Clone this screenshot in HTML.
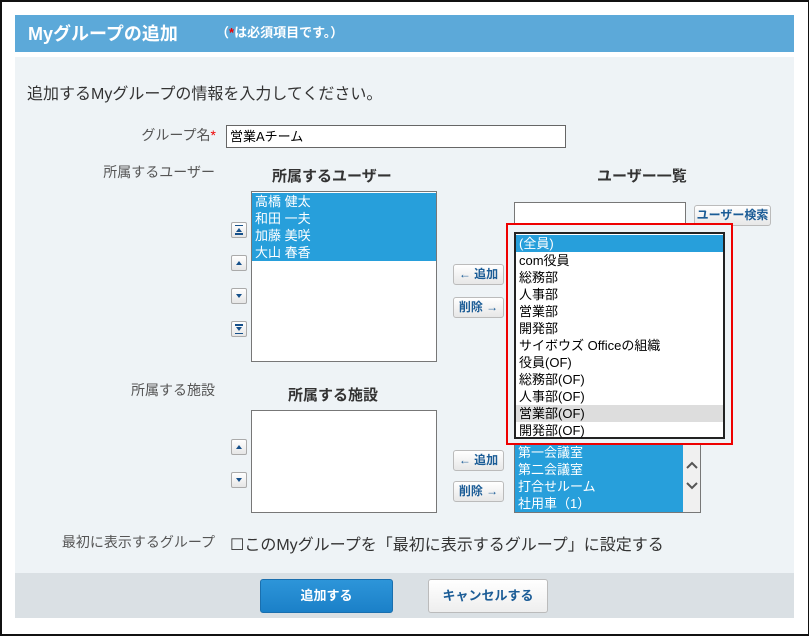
<!DOCTYPE html>
<html><head><meta charset="utf-8"><style>
*{margin:0;padding:0;box-sizing:border-box}
body{width:809px;height:636px;position:relative;background:#fff;font-family:"Liberation Sans","Noto Sans CJK JP",sans-serif;overflow:hidden}
.a{position:absolute}
.frame{left:0;top:0;width:809px;height:636px;border:2px solid #111;border-right-width:1px;border-bottom-width:2px}
.hdr{left:15px;top:15px;width:779px;height:37px;background:#5ca9d9}
.body{left:15px;top:57px;width:779px;height:516px;background:#eef3f6}
.foot{left:15px;top:573px;width:779px;height:45px;background:#dae0e4}
.lbl{font-size:14px;color:#555;text-align:right;width:200px;left:15px}
.h{font-size:15px;font-weight:bold;color:#333}
.list{background:#fff;border:1px solid #777}
.sel{background:#279fdb;color:#fff}
.row{font-size:13px;line-height:17px;height:17px;padding-left:3px;white-space:nowrap}
.ob{width:16px;height:16px;border:1px solid #aaa;border-radius:2px;background:linear-gradient(#fff,#e6e6e6);left:231px}
.ob:after{content:"";position:absolute;left:4px;top:5px;border-left:3px solid transparent;border-right:3px solid transparent}
.up:after{border-bottom:4px solid #16508a}
.dn:after{border-top:4px solid #16508a}
.bar{position:absolute;left:3px;width:8px;height:1px;background:#16508a}
.btn{border:1px solid #bbb;border-radius:3px;background:linear-gradient(#fff,#e7e7e7);font-size:12px;font-weight:bold;color:#1b5c96;text-align:center;line-height:19px;height:21px}
</style></head><body>
<div class="a frame"></div>
<div class="a hdr"></div>
<div class="a" style="left:28px;top:20px;font-size:18px;font-weight:bold;color:#fff">Myグループの追加</div>
<div class="a" style="left:216px;top:22px;font-size:13px;font-weight:bold;color:#fff">（<span style="color:#e00">*</span>は必須項目です。）</div>
<div class="a body"></div>
<div class="a foot"></div>
<div class="a" style="left:27px;top:80px;font-size:16px;color:#333">追加するMyグループの情報を入力してください。</div>
<div class="a lbl" style="top:125px;text-align:right;width:201px">グループ名<span style="color:#e00">*</span></div>
<div class="a" style="left:226px;top:125px;width:340px;height:23px;background:#fff;border:1px solid #666;font-size:13px;line-height:21px;padding-left:3px">営業Aチーム</div>
<div class="a lbl" style="top:162px">所属するユーザー</div>
<div class="a h" style="left:272px;top:165px">所属するユーザー</div>
<div class="a h" style="left:597px;top:165px">ユーザー一覧</div>
<div class="a list" style="left:251px;top:191px;width:186px;height:171px;padding-top:1px">
<div class="row sel">高橋 健太</div><div class="row sel">和田 一夫</div><div class="row sel">加藤 美咲</div><div class="row sel">大山 春香</div></div>
<div class="a ob up" style="top:222px"><div class="bar" style="top:2px"></div><div class="bar" style="top:10px;height:2px"></div></div>
<div class="a ob up" style="top:255px"></div>
<div class="a ob dn" style="top:288px"></div>
<div class="a ob dn" style="top:321px"><div class="bar" style="top:2px;height:2px"></div><div class="bar" style="top:11px"></div></div>
<div class="a btn" style="left:453px;top:264px;width:51px">← 追加</div>
<div class="a btn" style="left:453px;top:297px;width:51px">削除 →</div>
<div class="a" style="left:514px;top:202px;width:172px;height:24px;background:#fff;border:1px solid #777"></div>
<div class="a btn" style="left:694px;top:205px;width:77px">ユーザー検索</div>
<div class="a lbl" style="top:380px">所属する施設</div>
<div class="a h" style="left:288px;top:384px">所属する施設</div>
<div class="a list" style="left:251px;top:410px;width:186px;height:103px"></div>
<div class="a ob up" style="top:439px"></div>
<div class="a ob dn" style="top:472px"></div>
<div class="a btn" style="left:453px;top:450px;width:51px">← 追加</div>
<div class="a btn" style="left:453px;top:481px;width:51px">削除 →</div>
<div class="a list" style="left:514px;top:430px;width:187px;height:83px;background:#f0f0f0;overflow:hidden">
<div style="width:168px;padding-top:13px" class="sel">
<div class="row">第一会議室</div><div class="row">第二会議室</div><div class="row">打合せルーム</div><div class="row">社用車（1）</div></div>
<svg class="a" style="left:169px;top:28px" width="16" height="40"><path d="M3 9 L8 4 L13 9 M3 24 L8 29 L13 24" fill="none" stroke="#555" stroke-width="2"/></svg>
</div>
<div class="a" style="left:506px;top:223px;width:227px;height:222px;border:2px solid #e00;background:#eef3f6"></div>
<div class="a" style="left:514px;top:232px;width:211px;height:207px;border:2px solid #222;background:#fff;padding-top:1px">
<div class="row sel">(全員)</div><div class="row">com役員</div><div class="row">総務部</div><div class="row">人事部</div><div class="row">営業部</div><div class="row">開発部</div><div class="row">サイボウズ Officeの組織</div><div class="row">役員(OF)</div><div class="row">総務部(OF)</div><div class="row">人事部(OF)</div><div class="row" style="background:#ddd">営業部(OF)</div><div class="row">開発部(OF)</div></div>
<div class="a lbl" style="top:532px">最初に表示するグループ</div>
<div class="a" style="left:230px;top:531px;font-size:16px;color:#333">☐このMyグループを「最初に表示するグループ」に設定する</div>
<div class="a" style="left:260px;top:579px;width:133px;height:34px;background:linear-gradient(#2d95d9,#1b80c8);border:1px solid #1a6fae;border-radius:3px;color:#fff;font-size:13px;font-weight:bold;text-align:center;line-height:32px">追加する</div>
<div class="a" style="left:428px;top:579px;width:120px;height:34px;background:linear-gradient(#fff,#eee);border:1px solid #bbb;border-radius:3px;color:#1b5c96;font-size:13px;font-weight:bold;text-align:center;line-height:32px">キャンセルする</div>
</body></html>
